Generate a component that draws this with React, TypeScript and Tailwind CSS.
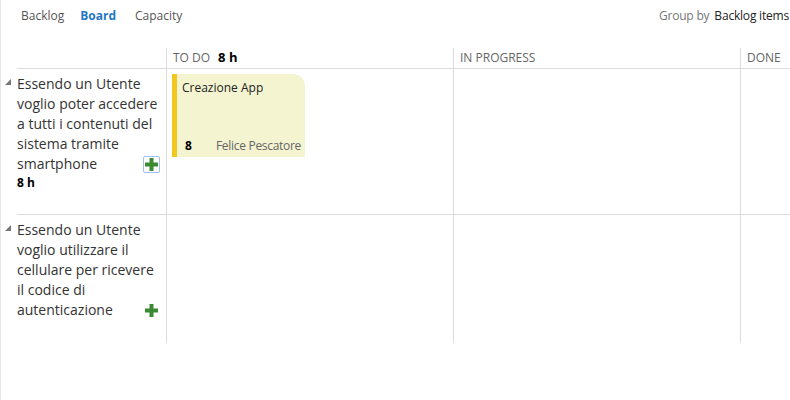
import React from 'react'

const FONT = { fontFamily: '"Open Sans", "Noto Sans", sans-serif' }

function Triangle() {
  return (
    <svg width="6" height="6" viewBox="0 0 6 6" className="block">
      <polygon points="6,0 6,6 0,6" fill="#777" />
    </svg>
  )
}

function Plus({ focused }: { focused?: boolean }) {
  const icon = (
    <svg width="13" height="13" viewBox="0 0 13 13" className="block">
      <rect x="4.5" y="0" width="4" height="13" fill="#3a8a33" />
      <rect x="0" y="4.5" width="13" height="4" fill="#3a8a33" />
    </svg>
  )
  if (!focused) return icon
  return (
    <div className="-mr-[2px] flex h-[17px] w-[17px] items-center justify-center rounded-[2px] border border-[#9dc0f2]">
      {icon}
    </div>
  )
}

function StoryTitle({ lines, hours, focused }: { lines: string[]; hours?: string; focused?: boolean }) {
  const last = lines.length - 1
  return (
    <div className="pt-[5px] pr-[8px] text-[14px] leading-[20px] text-[#333]">
      {lines.map((l, i) =>
        i === last ? (
          <div key={i} className="flex items-center justify-between whitespace-nowrap">
            <span>{l}</span>
            <Plus focused={focused} />
          </div>
        ) : (
          <div key={i} className="whitespace-nowrap">{l}</div>
        )
      )}
      {hours && <div className="text-[12px] font-bold leading-[18px] text-black">{hours}</div>}
    </div>
  )
}

export default function App() {
  return (
    <div className="h-[400px] w-[790px] overflow-hidden border-l border-[#e4e4e4] bg-white" style={FONT}>
      {/* tabs */}
      <div className="flex h-[31px] items-center justify-between text-[12px]">
        <div className="flex items-center">
          <span className="ml-[20px] text-[#555]">Backlog</span>
          <span className="ml-[16px] font-bold text-[#1f78c8]">Board</span>
          <span className="ml-[19px] text-[#555]">Capacity</span>
        </div>
        <div className="flex items-center pr-[1px] tracking-[-0.2px]">
          <span className="text-[#777]">Group by</span>
          <span className="ml-[5px] text-[#222]">Backlog items</span>
        </div>
      </div>

      <div className="mt-[17px]">
        {/* column headers */}
        <div className="flex h-[21px]">
          <div className="w-[16px]" />
          <div className="flex flex-1 border-b border-[#dcdcdc]">
            <div className="w-[149px]" />
            <div className="flex w-[287px] items-center border-l border-[#dcdcdc] pl-[6px] text-[12px] text-[#666]">
              TO DO<span className="ml-[8px] text-[13px] font-bold text-black">8 h</span>
            </div>
            <div className="flex w-[287px] items-center border-l border-[#dcdcdc] pl-[6px] text-[12px] text-[#666]">
              IN PROGRESS
            </div>
            <div className="flex flex-1 items-center border-l border-[#dcdcdc] pl-[6px] text-[12px] text-[#666]">
              DONE
            </div>
          </div>
        </div>

        {/* row 1 */}
        <div className="flex h-[146px]">
          <div className="w-[16px] pt-[10px] pl-[4px]">
            <Triangle />
          </div>
          <div className="flex flex-1 border-b border-[#dcdcdc]">
            <div className="w-[149px]">
              <StoryTitle
                lines={['Essendo un Utente', 'voglio poter accedere', 'a tutti i contenuti del', 'sistema tramite', 'smartphone']}
                hours="8 h"
                focused
              />
            </div>
            <div className="w-[287px] border-l border-[#dcdcdc] pt-[5px] pl-[5px]">
              <div className="flex h-[83px] w-[133px] flex-col justify-between rounded-tr-[12px] border-l-[5px] border-[#f2c81e] bg-[#f4f4d1] pt-[5px] pb-[2px] pl-[5px] pr-[4px] text-[12px]">
                <div className="text-[#222]">Creazione App</div>
                <div className="flex items-center justify-between">
                  <span className="pl-[3px] font-bold text-black">8</span>
                  <span className="tracking-[-0.3px] text-[#666]">Felice Pescatore</span>
                </div>
              </div>
            </div>
            <div className="w-[287px] border-l border-[#dcdcdc]" />
            <div className="flex-1 border-l border-[#dcdcdc]" />
          </div>
        </div>

        {/* row 2 */}
        <div className="flex h-[128px]">
          <div className="w-[16px] pt-[10px] pl-[4px]">
            <Triangle />
          </div>
          <div className="flex flex-1">
            <div className="w-[149px]">
              <StoryTitle
                lines={['Essendo un Utente', 'voglio utilizzare il', 'cellulare per ricevere', 'il codice di', 'autenticazione']}
              />
            </div>
            <div className="w-[287px] border-l border-[#dcdcdc]" />
            <div className="w-[287px] border-l border-[#dcdcdc]" />
            <div className="flex-1 border-l border-[#dcdcdc]" />
          </div>
        </div>
      </div>
    </div>
  )
}
